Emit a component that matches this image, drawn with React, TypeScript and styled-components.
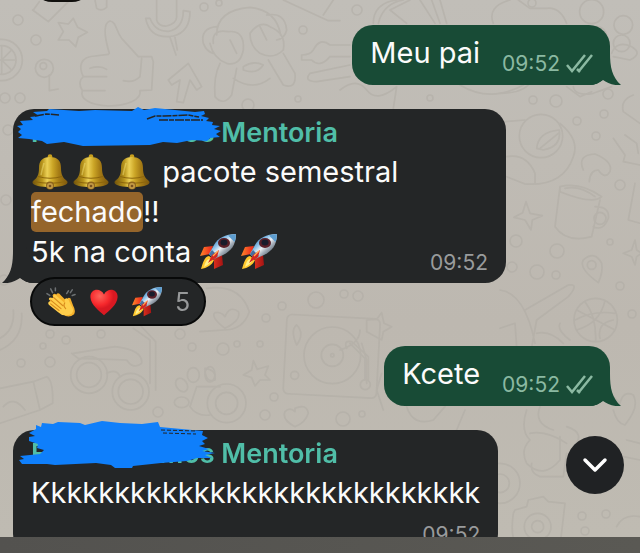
import React from "react";
import styled, { createGlobalStyle } from "styled-components";

const GlobalStyle = createGlobalStyle`
  * { box-sizing: border-box; }
  body {
    margin: 0;
    background: #bfbbb4;
    font-family: Inter, "Liberation Sans", sans-serif;
  }
  p { margin: 0; }
`;

const Page = styled.div`
  display: flex;
  flex-direction: column;
  height: 100vh;
`;

const Chat = styled.main`
  position: relative;
  flex: 1;
  min-height: 0;
  overflow: hidden;
  background: linear-gradient(180deg, #c1beb8, #bdb8b0 60%, #bfbbb2);
`;

const Wallpaper = styled.svg`
  position: absolute;
  inset: 0;
  width: 100%;
  height: 100%;
`;

const Messages = styled.ol`
  position: relative;
  display: flex;
  flex-direction: column;
  margin: 0;
  padding: 25px 30px 0 13px;
  list-style: none;
`;

const Message = styled.li<{ $mine?: boolean; $space?: number }>`
  display: flex;
  flex-direction: column;
  align-items: ${(p) => (p.$mine ? "flex-end" : "flex-start")};
  margin-bottom: ${(p) => p.$space ?? 24}px;
`;

const Bubble = styled.article<{ $mine?: boolean }>`
  position: relative;
  max-width: 493px;
  padding: ${(p) => (p.$mine ? "8px 16px 9px 18px" : "8px 18px")};
  border-radius: 21px;
  color: #fbfbfb;
  background: ${(p) => (p.$mine ? "#184b36" : "#242627")};
`;

const Tail = styled.svg<{ $mine?: boolean }>`
  position: absolute;
  bottom: 0;
  ${(p) => (p.$mine ? "right: -11px;" : "left: -11px; transform: scaleX(-1);")}
  width: 32px;
  height: 36px;
  fill: ${(p) => (p.$mine ? "#184b36" : "#242627")};
`;

const Row = styled.div<{ $spread?: boolean }>`
  display: flex;
  align-items: flex-start;
  justify-content: ${(p) => (p.$spread ? "space-between" : "flex-start")};
  gap: 22px;
`;

const Text = styled.p`
  font-size: 29px;
  line-height: 40px;
`;

const Mark = styled.mark`
  display: inline-block;
  border-radius: 5px;
  color: inherit;
  background: #95652b;
`;

const Time = styled.time<{ $mine?: boolean; $below?: boolean }>`
  display: flex;
  align-items: center;
  justify-content: flex-end;
  gap: 6px;
  margin-top: ${(p) => (p.$below ? 10 : 19)}px;
  font-size: 21px;
  line-height: 24px;
  color: ${(p) => (p.$mine ? "#8bb9a2" : "#999b9c")};
`;

const Name = styled.h2`
  position: relative;
  display: flex;
  gap: 112px;
  margin: 0 0 3px;
  font-size: 27px;
  font-weight: 600;
  line-height: 32px;
  color: #50bea8;
`;

const Scribble = styled.svg`
  position: absolute;
  top: -9px;
  left: -18px;
  width: 215px;
  height: 50px;
  overflow: visible;
  fill: #0f7ffb;
`;

const Reactions = styled.button`
  position: relative;
  display: flex;
  align-items: center;
  gap: 13px;
  height: 49px;
  margin: -6px 0 0 17px;
  padding: 0 14px;
  border: 2px solid #080909;
  border-radius: 25px;
  color: #97999a;
  background: #242627;
  font: 25px/40px Inter, "Liberation Sans", sans-serif;
`;

const Glyph = styled.svg<{ $size: number; $inline?: boolean }>`
  width: ${(p) => p.$size}px;
  height: ${(p) => p.$size}px;
  flex: none;
  ${(p) => p.$inline && "margin: 0 4px 0 1px; vertical-align: -8px;"}
`;

const ScrollDown = styled.button`
  position: absolute;
  right: 16px;
  bottom: 43px;
  display: grid;
  place-items: center;
  width: 58px;
  height: 58px;
  padding: 0;
  border: 0;
  border-radius: 50%;
  background: #202224;
`;

const PreviousEdge = styled.div`
  position: absolute;
  top: -38px;
  left: 32px;
  width: 60px;
  height: 40px;
  border-radius: 20px;
  background: #11100e;
`;

const BottomBar = styled.footer`
  flex: none;
  height: 16px;
  background: linear-gradient(90deg, #53524f, #5a5954);
`;

const Bell = () => (
  <Glyph $size={36} $inline viewBox="0 0 36 36" role="img" aria-label="sino">
    <defs>
      <linearGradient id="brass" x1="0" x2="1">
        <stop offset="0" stopColor="#6f520c" />
        <stop offset=".28" stopColor="#b8941c" />
        <stop offset=".42" stopColor="#ecd055" />
        <stop offset=".58" stopColor="#cba526" />
        <stop offset=".75" stopColor="#a67c15" />
        <stop offset="1" stopColor="#7c570f" />
      </linearGradient>
    </defs>
    <circle cx="18" cy="2.500" r="2.300" fill="#c9a01d" />
    <path d="M18 3C10 3 7 7 7 14C7 21 5 24 1 27C-2 31 8 33 18 33S38 31 35 27C31 24 29 21 29 14C29 7 26 3 18 3Z" fill="url(#brass)" />
    <path d="M6 22.500Q18 26 30 22.500M2 27.500Q18 31 34 27.500" fill="none" stroke="#8c650c" strokeWidth="1" />
    <path d="M12 9Q10 16 9 21" fill="none" stroke="#fff18c" strokeWidth="1.500" opacity=".4" />
    <circle cx="18" cy="31.500" r="4" fill="#8d641b" />
    <circle cx="18" cy="32" r="3" fill="#c39a45" />
    <circle cx="18" cy="32" r="1.300" fill="#765020" />
  </Glyph>
);

const Rocket = ({ size = 36, inline = false }: { size?: number; inline?: boolean }) => (
  <Glyph $size={size} $inline={inline} viewBox="0 0 36 36" role="img" aria-label="foguete">
    <defs>
      <linearGradient id="hull" x1=".2" y1=".2" x2=".8" y2=".8">
        <stop offset="0" stopColor="#3f7fba" />
        <stop offset=".3" stopColor="#8fc3ea" />
        <stop offset=".5" stopColor="#eef1f4" />
        <stop offset=".7" stopColor="#a3adb8" />
        <stop offset="1" stopColor="#55606c" />
      </linearGradient>
      <linearGradient id="fin" x1="0" x2="1">
        <stop offset="0" stopColor="#ff8a28" />
        <stop offset=".4" stopColor="#f33b22" />
        <stop offset="1" stopColor="#a51414" />
      </linearGradient>
    </defs>
    <path d="M13 12L4 13L0 22L10 20ZM22 21L23 31L14 35L14 25Z" fill="url(#fin)" />
    <path d="M9 22C4 23 3 29 1 35C7 34 12 31 14 26Z" fill="#ffc82e" />
    <path d="M9 25C6 26 5 29 4 33C8 31 10 29 12 26Z" fill="#fff08b" />
    <path d="M36 0C25 0 18 4 14 11L9 20L14 25L23 21C31 17 36 11 36 0Z" fill="url(#hull)" />
    <path d="M36 0Q31 0 28 1.500L34.500 8Q36 5 36 0Z" fill="#5d9dcf" />
    <path d="M9 20L14 25L18 22L12 16Z" fill="#466f9d" />
    <ellipse cx="24" cy="9" rx="6" ry="5" fill="#5a2029" />
    <ellipse cx="24" cy="8.500" rx="3.500" ry="3" fill="#191c2b" />
    <path d="M19 16L12 21L8 29L17 23Z" fill="#d5261f" />
    <path d="M18 17L13 22" stroke="#ffad54" strokeWidth="1.300" />
  </Glyph>
);

const Clap = () => (
  <Glyph $size={30} viewBox="0 0 32 32" role="img" aria-label="palmas">
    <path d="M1 7L4 9M5 2L7 6M10 1V4M24 4L22 7M28 3L26 6M31 8L28 9" stroke="#6d7173" strokeWidth="1.600" strokeLinecap="round" />
    <path d="M11 8Q13 5 16 9L22 15Q23 10 26 12L29 20Q32 25 30 29Q24 34 18 29L6 20Q4 17 8 17L4 14Q4 10 8 12L7 9Q8 6 11 8Z" fill="#f5b12b" />
    <path d="M8 9Q10 7 12 10L20 17L20 13Q23 10 25 16L29 24Q29 30 22 30Q17 31 13 27L3 19Q1 16 5 15L3 13Q3 10 7 12Z" fill="#ffce4b" />
    <path d="M8 11L18 20M5 14L16 23M5 18L14 25M20 17Q18 20 21 23" fill="none" stroke="#d88a1d" strokeWidth="1.200" strokeLinecap="round" />
  </Glyph>
);

const Heart = () => (
  <Glyph $size={30} viewBox="0 0 32 32" role="img" aria-label="coração">
    <defs>
      <radialGradient id="heart" cx=".35" cy=".25">
        <stop offset="0" stopColor="#ff645a" />
        <stop offset=".7" stopColor="#f6282c" />
        <stop offset="1" stopColor="#d91922" />
      </radialGradient>
    </defs>
    <path d="M16 30C11 26 2 19 1.500 11C1 2 12 0 16 8C20 0 31 2 30.500 11C30 19 21 26 16 30Z" fill="url(#heart)" />
  </Glyph>
);

const Ticks = () => (
  <svg width="28" height="20" viewBox="0 0 28 20" fill="none" stroke="currentColor" strokeWidth="2.500" role="img" aria-label="entregue">
    <path d="M1 11L6 17L19 1M13 17L26 1M14 18L11 15" />
  </svg>
);

const BubbleTail = ({ mine = false }: { mine?: boolean }) => (
  <Tail $mine={mine} viewBox="0 0 32 36" aria-hidden="true">
    <path d="M8 0H21V4C21 18 23 28 32 36C25 37 18 34 14 31C10 34 6 36 0 36V20Z" />
  </Tail>
);

const ScribbleOne = () => (
  <Scribble viewBox="0 0 215 50" aria-hidden="true">
    <path d="M20 4L34 3L36 1L66 3L82 2L119 3L125 -1L131 2L142 0L182 4L191 3L192 6L188 8L196 10L193 13L200 14L199 17L207 18L201 21L208 23L203 26L207 29L197 30L194 33L179 32L164 35L150 34L137 37L70 38L51 34L34 36L29 33L16 31L5 30L9 27L5 24L8 21L4 18L10 17L7 13L20 12L17 9L26 8Z" />
    <path d="M134 11L142 8L151 8L175 7L186 9M146 12L190 12M22 8L33 6L46 7" stroke="#242627" strokeWidth="1.500" strokeDasharray="9 1 5 1" fill="none" />
  </Scribble>
);

const ScribbleTwo = () => (
  <Scribble viewBox="0 0 215 50" aria-hidden="true">
    <path d="M23 0L23 -4L28 -2L29 -6L40 -5L45 -7L67 -6L72 -4L89 -8L107 -6L129 -5L145 -7L147 -2L190 2L189 6L195 9L189 12L192 15L186 17L196 20L189 22L202 24L192 26L199 29L184 29L174 32L148 34L120 37L119 39L102 39L98 36L83 34L42 36L34 35L9 35L6 31L11 30L7 27L27 25L31 21L24 19L25 15L16 12L16 8L22 7L16 4Z" />
    <path d="M148 1L184 2M150 4L183 5" stroke="#242627" strokeWidth="1" strokeDasharray="4 2" />
  </Scribble>
);

const Doodles = () => (
  <Wallpaper viewBox="0 0 640 537" preserveAspectRatio="xMinYMin slice" aria-hidden="true">
    <g fill="none" stroke="#aeaaa3" strokeWidth="5" strokeLinejoin="round" strokeLinecap="round" opacity=".5">
      <g transform="scale(.3333)">
        <path d="M328 160C313 110 308 70 330 63C350 65 348 95 365 115L415 170H455L460 185L455 270L420 272C425 300 380 318 325 318C265 315 240 295 247 272C237 255 238 240 250 230C235 200 240 170 285 168L325 163M250 230H320M247 272H315M270 205Q300 195 320 208M370 242Q400 250 420 230L425 175" />
        <path d="M220 55L233 82L262 97L235 112L227 140L207 120L175 120L190 95L175 68L205 72ZM98 30L145 65L205 5M100 30L118 5M285 0L290 25Q305 35 320 22L320 0" />
        <path d="M470 0V60Q475 80 500 78Q530 70 530 50V0M437 55Q450 120 520 108Q570 95 570 35L550 32Q550 85 505 94Q465 95 450 55ZM510 112L528 165M525 112L532 150M565 190L505 240L515 255L540 240L530 305L550 308L570 240L590 270L605 260Z" />
        <path d="M650 105Q650 30 750 22Q830 30 842 105M650 80Q600 85 610 130Q620 155 640 160M800 45Q855 35 860 90Q855 115 830 120M640 130Q635 85 685 95Q735 90 730 150Q720 200 680 190Q640 175 630 130M750 100Q780 60 810 80Q860 100 850 150Q820 180 780 160Q750 140 750 100M690 120L710 160M780 80L800 120M660 190Q640 230 645 290Q670 320 695 285L710 205M805 180L850 255Q890 270 885 220L850 160M700 235Q760 275 810 235M730 200Q760 180 790 195Q770 225 730 210Z" />
        <circle cx="5" cy="180" r="62" /><circle cx="5" cy="180" r="43" /><path d="M5 140V220M-30 180H45M5 180L35 150M5 180L35 210M148 225V272L175 267" />
        <circle cx="133" cy="205" r="27" /><circle cx="130" cy="198" r="10" />
        <path d="M850 0L985 62H1020M970 45L1000 0M905 165Q930 165 940 150Q960 110 990 135H1050M905 165V180H935Q960 205 990 170H1050M1050 195L930 220Q910 245 950 245L1050 230" />
      </g>
      <g transform="translate(340 0) scale(.3333)">
        <path d="M100 70Q100 10 170 0M115 70Q130 10 190 0M240 0L285 70M275 0L300 70M300 0L320 70M200 70L150 30L210 0M460 70Q440 20 510 0M535 0L570 25L620 25Q660 20 680 70" />
        <circle cx="755" cy="35" r="36" /><circle cx="850" cy="75" r="28" /><circle cx="770" cy="110" r="30" /><circle cx="845" cy="130" r="25" /><path d="M815 160Q830 120 875 140Q910 160 870 180L820 170M0 270Q50 230 80 270T170 260L160 325M360 255Q450 310 550 255M700 260Q705 290 760 280L815 260" />
      </g>
      <g transform="translate(500 80) scale(.3333)">
        <circle cx="123" cy="168" r="65" /><path d="M15 125L75 120M180 130Q240 180 220 230Q190 320 75 312L20 290M20 230Q80 220 105 280V310M110 205Q115 155 178 150Q185 200 130 210ZM120 205L175 160" />
        <path d="M250 270Q230 225 285 222Q340 245 330 275Q315 300 295 270Q270 270 268 305M180 320L165 440Q200 490 275 470L300 360M180 320Q240 305 305 350Q280 375 180 335ZM195 325Q240 315 285 350M285 380Q330 380 325 415Q310 455 280 440M78 365L90 400L127 407L97 420L93 450L75 420L42 412L68 398Z" />
        <circle cx="300" cy="415" r="18" /><path d="M340 175L375 225L370 245L420 255M375 165L410 190L415 220M405 310L385 420L420 430M400 45Q360 60 370 95L420 130M295 608Q235 565 250 540Q285 510 305 550Q310 575 295 608Z" />
        <circle cx="275" cy="555" r="13" /><circle cx="287" cy="720" r="65" /><path d="M230 690L345 750M230 750Q300 730 315 662M255 665Q290 710 287 785M225 720Q280 690 345 700M75 690L205 615Q240 610 205 650L110 720L90 830M0 630Q75 640 105 790M0 745L45 730L50 800M110 760Q150 750 190 790M200 20L240 50L275 35M0 40Q60 40 85 15M405 480L410 510L425 520L410 530L405 555L395 530L370 520L395 510Z" />
      </g>
      <g transform="translate(200 280) scale(.3333)">
        <rect x="255" y="110" width="280" height="238" rx="15" transform="rotate(3 395 230)" /><circle cx="397" cy="226" r="85" /><circle cx="397" cy="226" r="33" /><circle cx="397" cy="226" r="5" /><circle cx="284" cy="286" r="12" /><circle cx="496" cy="314" r="15" />
        <path d="M450 190L495 235V300M440 205Q430 180 455 185L505 230V300M290 135Q270 150 290 195Q315 160 290 135M160 242L172 268L205 258L195 285L210 300L180 300L165 318L155 293L130 285L155 270ZM285 385Q320 370 325 400Q315 430 285 440Q245 420 255 395Q270 380 285 395ZM545 98L552 130L575 140L550 155L545 180L500 155V120L530 118ZM20 25Q120 10 148 95Q130 150 70 150L0 155M75 145Q30 110 45 98Q65 95 75 110Q90 75 115 95Q125 120 75 145M15 265Q50 270 45 300Q15 310 15 265" />
      </g>
      <g transform="translate(0 310) scale(.3333)">
        <circle cx="267" cy="195" r="55" /><circle cx="267" cy="195" r="37" /><circle cx="392" cy="245" r="55" /><circle cx="392" cy="245" r="37" /><circle cx="680" cy="280" r="58" /><circle cx="680" cy="280" r="33" />
        <path d="M220 130L345 110Q430 120 425 160Q400 180 380 150L235 145L215 130M320 190Q350 175 360 200M450 220V90L400 55M467 240V95L420 45M0 235L100 215L120 300L0 340M100 215L140 200Q160 210 158 280L120 300M10 290Q40 255 75 300M595 230H660M590 230L570 290Q590 320 630 315" />
        <ellipse cx="545" cy="225" rx="16" ry="22" transform="rotate(-35 545 225)" /><ellipse cx="580" cy="195" rx="18" ry="22" /><ellipse cx="630" cy="193" rx="15" ry="23" /><ellipse cx="545" cy="277" rx="22" ry="16" />
        <path d="M0 120Q70 90 65 10M0 85Q45 60 40 0" />
      </g>
      <g transform="translate(340 330) scale(.3333)">
        <path d="M0 60Q60 40 60 0M65 40L80 90V160M130 240L110 180L125 130M200 230Q220 290 280 270L315 230M350 300L375 240M560 240Q540 300 570 330Q540 360 560 400Q610 450 660 390V320M570 310Q620 300 680 340M600 230Q580 280 640 300M680 290Q740 310 700 350M820 240Q830 280 855 285Q900 230 880 195Q850 180 840 220L820 200" />
        <circle cx="480" cy="460" r="60" /><circle cx="480" cy="460" r="28" /><circle cx="593" cy="590" r="40" /><circle cx="593" cy="590" r="18" />
        <path d="M520 550Q510 620 530 650H660L675 520L625 515L610 500L565 510L560 530L525 540ZM575 400Q570 430 600 440H670L680 370M860 330L900 340M850 380L900 390M830 590Q850 550 900 560M690 30Q650 0 660 -20M780 25Q770 -20 820 -30" />
      </g>
      <g strokeWidth="1.600">
        {[[18,20,5],[36,40,5],[204,7,4],[219,3,3],[303,30,4],[5,98,5],[20,98,5],[248,105,6],[298,99,3],[357,10,5],[532,3,4],[430,98,3],[533,100,4],[556,101,6],[608,94,5],[577,121,4],[604,114,4],[596,136,4],[620,185,5],[516,241,6],[557,251,7],[537,272,7],[512,267,5],[556,275,4],[610,242,3],[620,286,4],[632,314,4],[316,300,8],[344,294,4],[358,296,5],[282,306,4],[266,318,4],[223,349,6],[237,344,3],[260,344,3],[274,397,4],[265,415,5],[343,419,7],[362,414,3],[50,334,4],[43,346,3],[66,340,4],[101,334,4],[180,334,5],[192,347,4],[50,362,5],[21,363,4],[8,130,5],[6,200,5],[4,280,5],[582,516,4],[606,514,4],[585,531,4],[158,412,5]].map(([x, y, r]) => (
          <circle key={`${x}-${y}`} cx={x} cy={y} r={r} />
        ))}
      </g>
    </g>
  </Wallpaper>
);

export default function App() {
  return (
    <Page>
      <GlobalStyle />
      <Chat>
        <Doodles />
        <PreviousEdge />
        <Messages>
          <Message $mine>
            <Bubble $mine>
              <BubbleTail mine />
              <Row>
                <Text>Meu pai</Text>
                <Time $mine>09:52 <Ticks /></Time>
              </Row>
            </Bubble>
          </Message>
          <Message $space={20}>
            <Bubble>
              <BubbleTail />
              <Name><span>F</span><span>mos Mentoria</span><ScribbleOne /></Name>
              <Text><Bell /><Bell /><Bell /> pacote semestral <Mark>fechado</Mark>!!</Text>
              <Row $spread>
                <Text>5k na conta <Rocket inline /><Rocket inline /></Text>
                <Time>09:52</Time>
              </Row>
            </Bubble>
            <Reactions type="button" aria-label="5 reações">
              <Clap /><Heart /><Rocket size={30} /><span>5</span>
            </Reactions>
          </Message>
          <Message $mine>
            <Bubble $mine>
              <BubbleTail mine />
              <Row>
                <Text>Kcete</Text>
                <Time $mine>09:52 <Ticks /></Time>
              </Row>
            </Bubble>
          </Message>
          <Message>
            <Bubble>
              <Name><span>F</span><span>mos Mentoria</span><ScribbleTwo /></Name>
              <Text>Kkkkkkkkkkkkkkkkkkkkkkkkkkkk</Text>
              <Time $below>09:52</Time>
            </Bubble>
          </Message>
        </Messages>
        <ScrollDown type="button" aria-label="Ir para o fim">
          <svg width="26" height="16" viewBox="0 0 26 16" fill="none" stroke="#fff" strokeWidth="3.500" strokeLinecap="round" strokeLinejoin="round">
            <path d="M3 3L13 13L23 3" />
          </svg>
        </ScrollDown>
      </Chat>
      <BottomBar />
    </Page>
  );
}
